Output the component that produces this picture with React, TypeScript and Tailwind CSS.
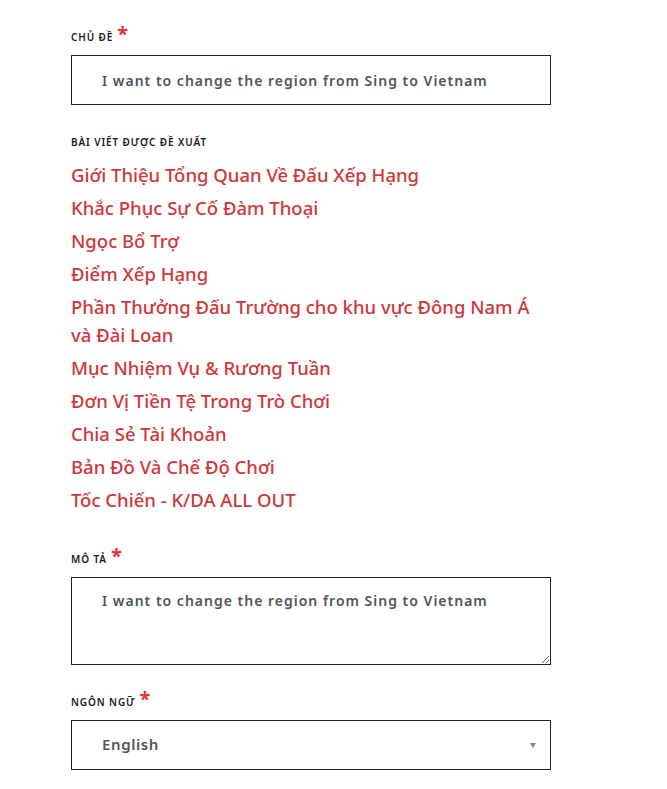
const links = [
  "Giới Thiệu Tổng Quan Về Đấu Xếp Hạng",
  "Khắc Phục Sự Cố Đàm Thoại",
  "Ngọc Bổ Trợ",
  "Điểm Xếp Hạng",
  "Phần Thưởng Đấu Trường cho khu vực Đông Nam Á và Đài Loan",
  "Mục Nhiệm Vụ & Rương Tuần",
  "Đơn Vị Tiền Tệ Trong Trò Chơi",
  "Chia Sẻ Tài Khoản",
  "Bản Đồ Và Chế Độ Chơi",
  "Tốc Chiến - K/DA ALL OUT",
];

function Label({ text, required }: { text: string; required?: boolean }) {
  return (
    <div className="flex h-[12px] items-center text-[10px] font-semibold uppercase leading-[12px] tracking-[0.9px] text-[#1a1a1a]">
      <span>{text}</span>
      {required && (
        <span className="relative -top-[3px] ml-[4px] text-[20px] font-bold leading-[12px] text-[#e8303a]">*</span>
      )}
    </div>
  );
}

export default function App() {
  return (
    <div className="min-h-[789px] bg-white pl-[71px] pt-[31px] font-['Noto_Sans',sans-serif]">
      <div className="w-[480px]">
        <Label text="Chủ đề" required />
        <div className="mt-[12px] flex h-[50px] items-center border border-[#222] px-[30px] text-[14px] font-semibold tracking-[1px] text-[#555]">
          I want to change the region from Sing to Vietnam
        </div>

        <div className="mt-[31px]">
          <Label text="Bài viết được đề xuất" />
        </div>
        <ul className="mt-[13px] flex flex-col gap-[5px]">
          {links.map((l) => (
            <li key={l} className="text-[18.5px] font-medium leading-[28px] text-[#d13639]">
              <a href="#">{l}</a>
            </li>
          ))}
        </ul>

        <div className="mt-[39px]">
          <Label text="Mô tả" required />
        </div>
        <textarea
          readOnly
          defaultValue="I want to change the region from Sing to Vietnam"
          className="mt-[12px] block h-[88px] w-full border border-[#222] px-[30px] pt-[12px] text-[14px] font-semibold tracking-[1px] text-[#555] outline-none"
        />

        <div className="mt-[31px]">
          <Label text="Ngôn ngữ" required />
        </div>
        <div className="mt-[12px] flex h-[50px] items-center justify-between border border-[#222] pl-[30px] pr-[14px] text-[15px] font-semibold tracking-[0.6px] text-[#555]">
          <span className="-mt-[2px]">English</span>
          <span className="h-0 w-0 border-x-[3px] border-t-[5px] border-x-transparent border-t-[#888]" />
        </div>
      </div>
    </div>
  );
}
